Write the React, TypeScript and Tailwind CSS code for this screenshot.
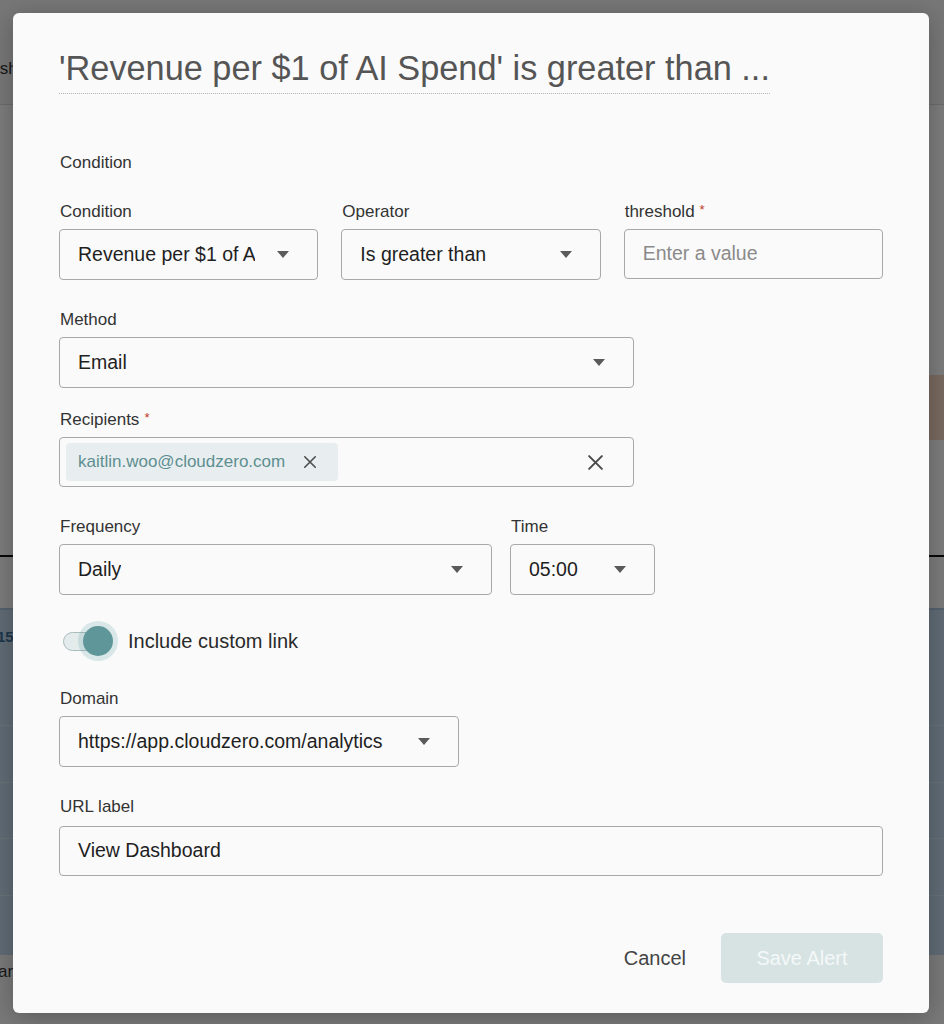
import React from 'react';

type SelectProps = {
  value: string;
  className?: string;
};

const Caret = () => (
  <svg width="12" height="7" viewBox="0 0 12 7" className="shrink-0">
    <path d="M0 0h12L6 7z" fill="#5a5a5a" />
  </svg>
);

const CrossIcon = ({ size, weight }: { size: number; weight: number }) => (
  <svg width={size} height={size} viewBox="0 0 16 16" className="shrink-0">
    <path d="M2 2L14 14M14 2L2 14" stroke="#4a4a4a" strokeWidth={weight} strokeLinecap="round" />
  </svg>
);

const FieldLabel = ({ text, required, className = 'mb-[7px]' }: { text: string; required?: boolean; className?: string }) => (
  <div className={`pl-px text-[17px] leading-[20px] text-[#333] ${className}`}>
    {text}
    {required && <span className="ml-[5px] align-top text-[13px] leading-[16px] text-[#c0392b]">*</span>}
  </div>
);

const SelectBox: React.FC<SelectProps> = ({ value, className = '' }) => (
  <div
    className={`flex h-[51px] items-center justify-between rounded-[4px] border border-[#a8a8a8] pl-[18px] pr-[28px] ${className}`}
  >
    <span className="mr-[22px] overflow-hidden whitespace-nowrap text-[19.5px] text-[#1f1f1f]">{value}</span>
    <Caret />
  </div>
);

// dimmed page that sits behind the dialog
const BackdropPage = () => (
  <div className="flex h-[1024px] w-full flex-col bg-[#f2f2f2]">
    <div className="flex h-[105px] items-center border-b border-[#d6d6d6] bg-[#efefef] pt-[34px]">
      <span className="-ml-[22px] text-[17px] text-[#333]">Dashboards</span>
    </div>
    <div className="h-[270px] bg-[#f8f8f8]" />
    <div className="flex h-[65px] justify-end bg-[#f8f8f8]">
      <div className="w-[220px] bg-[#f3d2bf]" />
    </div>
    <div className="h-[115px] bg-[#f8f8f8]" />
    <div className="h-[2px] bg-[#111]" />
    <div className="h-[51px] bg-[#f6f6f6]" />
    <div className="flex h-[347px] flex-col bg-[#c0d7ea]">
      <div className="flex h-[117px] items-center border-t-2 border-[#a9c4dc] pb-[60px]">
        <span className="-ml-[3px] text-[15px] font-bold text-[#3a6d96]">15</span>
      </div>
      <div className="h-[57px] border-t border-[#d3e2ee]" />
      <div className="h-[56px] border-t border-[#d3e2ee]" />
      <div className="h-[57px] border-t border-[#d3e2ee]" />
      <div className="flex-1 border-t border-[#d3e2ee]" />
    </div>
    <div className="flex flex-1 items-start bg-[#f2f2f2] pt-[4px]">
      <span className="-ml-[2px] text-[17px] text-[#333]">ar</span>
    </div>
  </div>
);

const AlertDialog = () => (
  <div className="ml-[13px] w-[916px] rounded-[6px] bg-[#fafafa] px-[46px] pb-[30px] pt-[35px] shadow-[0_4px_24px_rgba(0,0,0,0.25)]">
    <h2 className="inline-block border-b border-dotted border-[#b5b5b5] pb-[5px] text-[34.3px] font-normal leading-[40px] text-[#555]">
      'Revenue per $1 of AI Spend' is greater than ...
    </h2>

    <FieldLabel text="Condition" className="mt-[59px]" />

    <div className="mt-[29px] grid grid-cols-3 gap-x-[23px]">
      <div>
        <FieldLabel text="Condition" />
        <SelectBox value="Revenue per $1 of AI Spend" />
      </div>
      <div>
        <FieldLabel text="Operator" />
        <SelectBox value="Is greater than" />
      </div>
      <div>
        <FieldLabel text="threshold" required />
        <div className="flex h-[50px] items-center rounded-[4px] border border-[#a8a8a8] px-[18px] text-[19.5px] text-[#8a8a8a]">
          Enter a value
        </div>
      </div>
    </div>

    <div className="mt-[30px]">
      <FieldLabel text="Method" />
      <SelectBox value="Email" className="w-[575px]" />
    </div>

    <div className="mt-[22px]">
      <FieldLabel text="Recipients" required />
      <div className="flex h-[50px] w-[575px] items-center justify-between rounded-[4px] border border-[#a8a8a8] pl-[6px] pr-[29px]">
        <div className="flex h-[38px] items-center gap-[18px] rounded-[4px] bg-[#e8eef0] pl-[12px] pr-[21px]">
          <span className="text-[17px] text-[#5e8f91]">kaitlin.woo@cloudzero.com</span>
          <CrossIcon size={14} weight={1.8} />
        </div>
        <CrossIcon size={17} weight={1.9} />
      </div>
    </div>

    <div className="mt-[30px] flex gap-[18px]">
      <div>
        <FieldLabel text="Frequency" />
        <SelectBox value="Daily" className="w-[433px]" />
      </div>
      <div>
        <FieldLabel text="Time" />
        <SelectBox value="05:00" className="w-[145px]" />
      </div>
    </div>

    <div className="mt-[26px] flex h-[40px] items-center gap-[9px]">
      <div className="relative h-[40px] w-[60px] shrink-0">
        <div className="absolute left-[4px] top-[11px] h-[19px] w-[46px] rounded-full border border-[#a9bcbd] bg-[#e4ebeb]" />
        <div className="absolute left-[19px] top-0 h-[40px] w-[40px] rounded-full bg-[#5b9a9e]/20" />
        <div className="absolute left-[24px] top-[5px] h-[30px] w-[30px] rounded-full bg-[#5e9699]" />
      </div>
      <span className="text-[20px] text-[#2a2a2a]">Include custom link</span>
    </div>

    <div className="mt-[28px]">
      <FieldLabel text="Domain" />
      <SelectBox value="https://app.cloudzero.com/analytics" className="w-[400px]" />
    </div>

    <div className="mt-[30px]">
      <FieldLabel text="URL label" className="mb-[9px]" />
      <div className="flex h-[50px] items-center rounded-[4px] border border-[#a8a8a8] px-[18px] text-[19.5px] text-[#1f1f1f]">
        View Dashboard
      </div>
    </div>

    <div className="mt-[57px] flex items-center justify-end gap-[35px]">
      <button className="text-[20px] text-[#444]">Cancel</button>
      <button className="h-[50px] w-[162px] rounded-[5px] bg-[#d7e3e3] text-[20px] text-[#f4f8f8]">Save Alert</button>
    </div>
  </div>
);

export default function App() {
  return (
    <div className="relative h-[1024px] w-full overflow-hidden font-['Liberation_Sans',Arial,sans-serif]">
      <BackdropPage />
      <div className="absolute inset-0 flex items-start justify-start bg-black/50 pt-[13px]">
        <AlertDialog />
      </div>
    </div>
  );
}
